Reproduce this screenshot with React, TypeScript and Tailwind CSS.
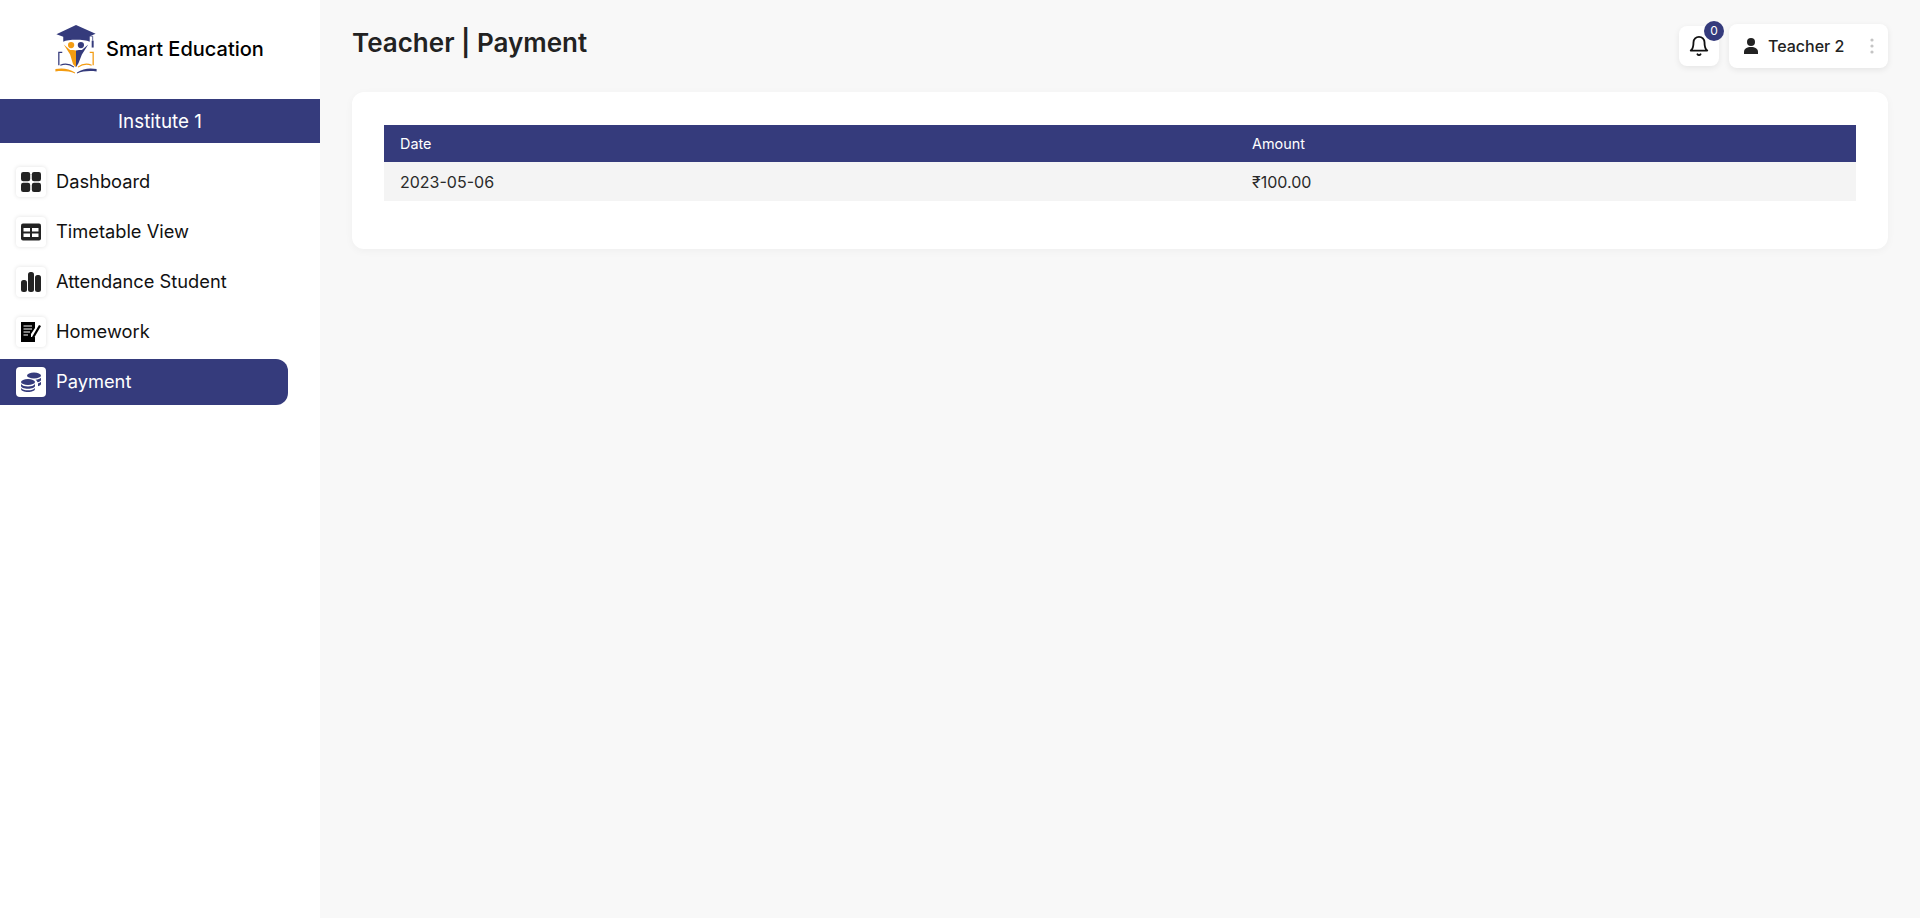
import React from "react";

const navy = "#353b7c";

function Logo() {
  return (
    <svg width="44" height="51" viewBox="0 0 44 52" className="shrink-0">
      <path d="M2 10.5 L22 1 L42 10 L36 12.5 V18 C30 15.5 14 15.5 9 18 V13 Z" fill="#353b7c" />
      <path d="M25 11 L39 12.5 V17" fill="none" stroke="#353b7c" strokeWidth="0.8" />
      <rect x="38" y="17" width="2" height="7" fill="#353b7c" />
      <circle cx="17" cy="21.5" r="3.2" fill="#f39c12" />
      <circle cx="27" cy="21.5" r="3.2" fill="#353b7c" />
      <path d="M9.5 21 L16 26.5 H19 L22 27 V44 L19 41 L16 31 Z" fill="#f39c12" />
      <path d="M34.5 21 L28 26.5 H25 L22 27 V44 L24.5 40 L28 31 Z" fill="#353b7c" />
      <path d="M8 29 H4.5 V42" fill="none" stroke="#353b7c" strokeWidth="1.3" />
      <path d="M6 42 C11 40 16 41 20 44" fill="none" stroke="#353b7c" strokeWidth="1.2" />
      <path d="M36 29 H39.5 V42" fill="none" stroke="#f39c12" strokeWidth="1.3" />
      <path d="M38 42 C33 40 28 41 24 44" fill="none" stroke="#f39c12" strokeWidth="1.2" />
      <path d="M1 46 C8 44.5 15 45.5 21 49.5 L21 50.5 C15 48 8 47.5 1 48.5 Z" fill="#f39c12" />
      <path d="M43 46 C36 44.5 29 45.5 23 49.5 L23 50.5 C29 48 36 47.5 43 48.5 Z" fill="#353b7c" />
    </svg>
  );
}

function DashIcon() {
  return (
    <svg width="20" height="20" viewBox="0 0 20 20" fill="#222">
      <rect x="0" y="0" width="9.2" height="9.2" rx="2.2" />
      <rect x="10.8" y="0" width="9.2" height="9.2" rx="2.2" />
      <rect x="0" y="10.8" width="9.2" height="9.2" rx="2.2" />
      <rect x="10.8" y="10.8" width="9.2" height="9.2" rx="2.2" />
    </svg>
  );
}

function TableIcon() {
  return (
    <svg width="20" height="18" viewBox="0 0 20 18">
      <rect width="20" height="17" y="0.5" rx="2" fill="#222" />
      <rect x="2.5" y="5" width="6.5" height="3.5" fill="#fff" />
      <rect x="11" y="5" width="6.5" height="3.5" fill="#fff" />
      <rect x="2.5" y="10.5" width="6.5" height="3.5" fill="#fff" />
      <rect x="11" y="10.5" width="6.5" height="3.5" fill="#fff" />
    </svg>
  );
}

function ChartIcon() {
  return (
    <svg width="20" height="20" viewBox="0 0 20 20" fill="#222">
      <rect x="0" y="8" width="6" height="12" rx="2.5" />
      <rect x="7" y="0" width="6" height="20" rx="2.5" />
      <rect x="14" y="3" width="6" height="17" rx="2.5" />
    </svg>
  );
}

function HomeworkIcon() {
  return (
    <svg width="20" height="20" viewBox="0 0 20 20">
      <path d="M0 0 H14 V6 L10 12 V15 H14 V20 H0 Z" fill="#000" />
      <path d="M2.5 4 H11 M2.5 7 H11 M2.5 10 H9 M2.5 13 H7" stroke="#fff" strokeWidth="1" />
      <path d="M11 15 L18 3 L20 4 L13 16 L10.5 17 Z" fill="#000" />
    </svg>
  );
}

function CoinsIcon() {
  return (
    <svg width="20" height="20" viewBox="0 0 20 20" fill={navy}>
      <ellipse cx="13" cy="3.5" rx="7" ry="3" />
      <path d="M14.5 7.8 C17 7.6 19 6.9 20 5.8 V8 C20 9 18.5 9.9 16.5 10.3 C16.2 9.2 15.5 8.4 14.5 7.8 Z" />
      <path d="M17 11.4 C18.3 11 19.4 10.4 20 9.7 V12 C20 13 18.8 13.8 17 14.3 Z" />
      <ellipse cx="7" cy="10" rx="7" ry="3" />
      <path d="M0 12 C1 13.7 4 14.5 7 14.5 C10 14.5 13 13.7 14 12 V14 C14 15.6 11 16.8 7 16.8 C3 16.8 0 15.6 0 14 Z" />
      <path d="M0 16 C1 17.5 4 18.3 7 18.3 C10 18.3 13 17.5 14 16 V17 C14 18.6 11 20 7 20 C3 20 0 18.6 0 17 Z" />
    </svg>
  );
}

function NavItem({ label, icon, active }: { label: string; icon: React.ReactNode; active?: boolean }) {
  return (
    <div
      className={
        active
          ? "flex h-[46px] w-[288px] items-center gap-[10px] rounded-r-xl bg-[#353b7c] pl-4 text-white"
          : "flex h-[46px] w-[288px] items-center gap-[10px] pl-4 text-[#111]"
      }
    >
      <div className="flex h-[30px] w-[30px] items-center justify-center rounded bg-white shadow-[0_0_4px_rgba(0,0,0,0.12)]">
        {icon}
      </div>
      <span className="pb-[2px] text-[18.3px] leading-none">{label}</span>
    </div>
  );
}

export default function App() {
  return (
    <div className="flex h-[918px] bg-[#f8f8f8] font-['Inter',sans-serif]">
      <aside className="w-[320px] shrink-0 bg-white">
        <div className="flex h-[99px] items-center justify-center gap-[8px] pr-[2px]">
          <Logo />
          <span className="pb-[2px] text-[20px] font-medium text-black">Smart Education</span>
        </div>
        <div className="flex h-[44px] items-center justify-center bg-[#353b7c] pt-[2px] text-[18.8px] text-white">
          Institute 1
        </div>
        <nav className="mt-[16px] flex flex-col gap-[4px]">
          <NavItem label="Dashboard" icon={<DashIcon />} />
          <NavItem label="Timetable View" icon={<TableIcon />} />
          <NavItem label="Attendance Student" icon={<ChartIcon />} />
          <NavItem label="Homework" icon={<HomeworkIcon />} />
          <NavItem label="Payment" icon={<CoinsIcon />} active />
        </nav>
      </aside>
      <main className="flex-1 px-[32px]">
        <header className="flex h-[92px] items-start justify-between">
          <h1 className="mt-[25px] text-[26px] leading-[36px] font-semibold text-[#222]">Teacher | Payment</h1>
          <div className="mt-[24px] flex items-start gap-[10px]">
            <div className="relative mt-[2px] flex h-[40px] w-[40px] items-center justify-center rounded-lg bg-white shadow-[0_2px_6px_rgba(0,0,0,0.08)]">
              <svg width="22" height="24" viewBox="0 0 24 24" fill="none" stroke="#111" strokeWidth="2" strokeLinecap="round" strokeLinejoin="round">
                <path d="M6 8a6 6 0 0 1 12 0c0 7 3 9 3 9H3s3-2 3-9" />
                <path d="M10.3 21a1.94 1.94 0 0 0 3.4 0" />
              </svg>
              <span className="absolute top-[-5px] right-[-5px] flex h-[20px] w-[20px] items-center justify-center rounded-full bg-[#353b7c] text-[12px] text-white">
                0
              </span>
            </div>
            <div className="flex h-[44px] w-[159px] items-center rounded-lg bg-white pr-[14px] pl-[15px] shadow-[0_2px_6px_rgba(0,0,0,0.08)]">
              <svg width="14" height="16" viewBox="0 0 14 16" fill="#222" className="shrink-0">
                <circle cx="7" cy="4" r="4" />
                <path d="M0 14 C0 10.5 3 9 7 9 C11 9 14 10.5 14 14 V16 H0 Z" />
              </svg>
              <span className="ml-[10px] text-[16px] font-medium text-[#222]">Teacher 2</span>
              <svg width="4" height="16" viewBox="0 0 4 16" fill="#c4c4c4" className="ml-auto">
                <circle cx="2" cy="2" r="1.6" />
                <circle cx="2" cy="8" r="1.6" />
                <circle cx="2" cy="14" r="1.6" />
              </svg>
            </div>
          </div>
        </header>
        <section className="rounded-xl bg-white px-[32px] pt-[33px] pb-[48px] shadow-[0_2px_8px_rgba(0,0,0,0.04)]">
          <table className="w-full table-fixed border-collapse text-left">
            <colgroup>
              <col className="w-[852px]" />
              <col />
            </colgroup>
            <thead>
              <tr className="h-[37px] bg-[#353b7c] text-[14.4px] text-white">
                <th className="pl-[16px] font-normal">Date</th>
                <th className="pl-[16px] font-normal">Amount</th>
              </tr>
            </thead>
            <tbody>
              <tr className="h-[39px] bg-[#f4f4f4] text-[16px] text-[#2a2a2a]">
                <td className="pl-[16px]">2023-05-06</td>
                <td className="pl-[16px]">₹100.00</td>
              </tr>
            </tbody>
          </table>
        </section>
      </main>
    </div>
  );
}
